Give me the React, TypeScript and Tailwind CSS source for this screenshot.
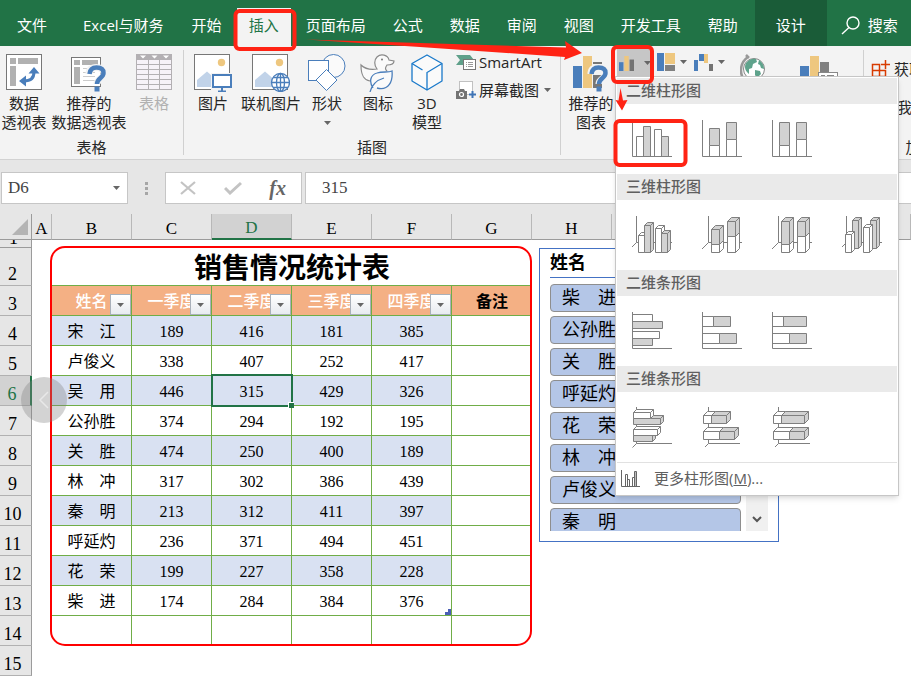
import type { ReactNode } from "react";
import clsx from "clsx";

const UI_FONT = "font-['Open_Sans','Noto_Sans_CJK_SC',sans-serif]";
const CELL_FONT = "font-['Liberation_Serif','Noto_Sans_CJK_SC',serif]";

const tabs = ["开始", "插入", "页面布局", "公式", "数据", "审阅", "视图", "开发工具", "帮助"];
const columns = ["A", "B", "C", "D", "E", "F", "G", "H", "I", "J", "K", "L"];
const quarters = ["姓名", "一季度", "二季度", "三季度", "四季度"];

const sales: [string, number, number, number, number][] = [
  ["宋　江", 189, 416, 181, 385],
  ["卢俊义", 338, 407, 252, 417],
  ["吴　用", 446, 315, 429, 326],
  ["公孙胜", 374, 294, 192, 195],
  ["关　胜", 474, 250, 400, 189],
  ["林　冲", 317, 302, 386, 439],
  ["秦　明", 213, 312, 411, 397],
  ["呼延灼", 236, 371, 494, 451],
  ["花　荣", 199, 227, 358, 228],
  ["柴　进", 174, 284, 384, 376],
];

const slicerItems = ["柴　进", "公孙胜", "关　胜", "呼延灼", "花　荣", "林　冲", "卢俊义", "秦　明"];

const Caret = () => (
  <svg width="7" height="4" viewBox="0 0 7 4" className="shrink-0">
    <path d="M0 0h7L3.5 4z" fill="#666" />
  </svg>
);

/* ---------- ribbon icons ---------- */

const PivotIcon = () => (
  <svg width="36" height="36" viewBox="0 0 36 36">
    <rect x=".5" y=".5" width="35" height="35" fill="#fff" stroke="#777" />
    <path d="M4 4h6v6H4zM12 4h20v6H12zM4 12h6v20H4z" fill="#b1b1b1" />
    <path d="M18 27c7 0 10-3 10-9" fill="none" stroke="#4a7ebb" strokeWidth="3" />
    <path d="M22.500 19.500 28 13l5.500 6.500zM20 21.500 13 27l7 5.500z" fill="#4a7ebb" />
  </svg>
);

const QuestionMark = ({ x, y }: { x: number; y: number }) => (
  <g transform={`translate(${x} ${y})`}>
    <path
      d="M2 9C2 4 5 2.500 9.500 2.500c5 0 7.500 2.500 7.500 6 0 5-7 5-7 10.500"
      fill="none"
      stroke="#f3f3f3"
      strokeWidth="7"
    />
    <path
      d="M2.500 9C3 4.500 5 2.500 9.500 2.500c5 0 7 2.500 7 5.500 0 5-6.500 5-6.500 11"
      fill="none"
      stroke="#4a7ebb"
      strokeWidth="4.500"
    />
    <path d="M7.500 21.500h5v5h-5z" fill="#4a7ebb" />
  </g>
);

const RecommendedPivotIcon = () => (
  <svg width="36" height="38" viewBox="0 0 36 38">
    <rect x=".5" y="3.500" width="29" height="29" fill="#fff" stroke="#777" />
    <path d="M3 6h6v5H3zM11 6h16v5H11zM3 13h6v17H3z" fill="#b1b1b1" />
    <path d="M12 14.500h14M12 18.500h12M12 22.500h12M12 26.500h12" stroke="#ccc" />
    <QuestionMark x={16} y={11} />
  </svg>
);

const TableIcon = () => (
  <svg width="36" height="36" viewBox="0 0 36 36">
    <rect x=".5" y=".5" width="35" height="35" fill="#f6f2f8" stroke="#b3b0b3" />
    <path d="M0 0h36v6H0z" fill="#b3b0b3" />
    <path d="M4 1.500h6l-3 3zM15.500 1.500h6l-3 3zM27 1.500h6l-3 3z" fill="#fff" />
    <path d="M0 10.500h36M0 15.500h36M0 20.500h36M0 25.500h36M0 30.500h36M12.500 6v30M23.500 6v30" stroke="#b3b0b3" />
  </svg>
);

const PhotoBase = () => (
  <>
    <rect x=".5" y=".5" width="35" height="35" fill="#fff" stroke="#777" />
    <circle cx="27.500" cy="8.500" r="3.700" fill="#eec77f" />
    <path d="M3 33v-7l10-8.500 8 7V33z" fill="#c1d3e9" />
  </>
);

const PictureIcon = () => (
  <svg width="38" height="38" viewBox="0 0 38 38">
    <PhotoBase />
    <path d="M17 19h22v17H17z" fill="#f3f3f3" />
    <rect x="19" y="21" width="18" height="12" fill="#fff" stroke="#4a7ebb" strokeWidth="2" />
    <path d="M28 34v3M24 37.500h8" stroke="#4a7ebb" strokeWidth="2" />
  </svg>
);

const OnlinePictureIcon = () => (
  <svg width="38" height="38" viewBox="0 0 38 38">
    <PhotoBase />
    <circle cx="28.500" cy="28.500" r="9" fill="#fff" stroke="#4a7ebb" strokeWidth="1.300" />
    <ellipse cx="28.500" cy="28.500" rx="4" ry="9" fill="none" stroke="#4a7ebb" strokeWidth="1.300" />
    <path d="M28.500 19.500v18M19.500 28.500h18M21 23.500h15M21 33.500h15" stroke="#4a7ebb" strokeWidth="1.300" />
  </svg>
);

const ShapesIcon = () => (
  <svg width="38" height="38" viewBox="0 0 38 38">
    <circle cx="25.500" cy="12" r="11.500" fill="#fafafa" stroke="#4a7ebb" />
    <rect x=".5" y="6.500" width="20" height="20" fill="#fff" stroke="#4a7ebb" />
    <path d="M18.500 15.500 29 26 18.500 36.500 8 26z" fill="#fff" stroke="#4a7ebb" />
  </svg>
);

const DuckIcon = () => (
  <svg width="36" height="38" viewBox="0 0 36 38">
    <path
      d="M10 27C4 26 1 22 1 11c4 4 9 5 16 4-3-4-3-9 0-12 4-4 11-2 12 3l5 1c0 3-3 4-7 4-2 3-2 4 0 6"
      fill="#fafafa"
      stroke="#8a8a8a"
      strokeWidth="1.200"
    />
    <circle cx="22" cy="5.500" r="1" fill="#777" />
    <path
      d="M13 34c-4-6-3-13 4-15 6-2 11 0 15-2 1 10-3 20-15 17M10 38c2-8 7-12 14-14"
      fill="#fafafa"
      stroke="#4a7ebb"
      strokeWidth="1.300"
    />
  </svg>
);

const CubeIcon = () => (
  <svg width="32" height="37" viewBox="0 0 32 37">
    <path
      d="M16 1 31 9.500v17.500L16 36 1 27V9.500z"
      fill="#fafafa"
      stroke="#1979ca"
      strokeWidth="1.300"
      strokeLinejoin="round"
    />
    <path d="M16 36V18.500L31 9.500M1 9.500l10.500 6.500" fill="none" stroke="#1979ca" strokeWidth="1.300" />
  </svg>
);

const SmartArtIcon = () => (
  <svg width="20" height="15" viewBox="0 0 20 15">
    <path d="M0 0h14l4 5-4 5H0l4-5z" fill="#5fa08a" />
    <rect x="7.500" y="4.500" width="12" height="10" fill="#fff" stroke="#777" />
    <path d="M10 7.500h1M12 7.500h5M10 9.500h1M12 9.500h5M10 11.500h1M12 11.500h5" stroke="#999" />
  </svg>
);

const ScreenshotIcon = () => (
  <svg width="20" height="18" viewBox="0 0 20 18">
    <rect x="3.500" y=".5" width="13" height="13" fill="#fff" stroke="#888" strokeDasharray="1 1" />
    <path d="M0 10h3l1-2h4l1 2h2v8H0z" fill="#737373" />
    <circle cx="5.500" cy="13.500" r="2" fill="none" stroke="#fff" strokeWidth="1.200" />
    <path d="M13 13.500h7M16.500 10v7" stroke="#3f74b5" strokeWidth="2" />
  </svg>
);

const RecommendedChartIcon = () => (
  <svg width="36" height="38" viewBox="0 0 36 38">
    <path d="M0 12h9v22H0z" fill="#4a7ebb" />
    <path d="M10 2h9v32h-9z" fill="#eec77f" />
    <path d="M20 8h9v2h-9zM20 21h9v13h-9z" fill="#777" />
    <QuestionMark x={16} y={11} />
  </svg>
);

const ColumnChartIcon = () => (
  <svg width="17" height="17" viewBox="0 0 17 17">
    <path d="M0 7h5v10H0z" fill="#4a7ebb" />
    <path d="M6 0h5v17H6z" fill="#eec77f" />
    <path d="M12 4h5v13h-5z" fill="#737373" />
  </svg>
);

const TreemapIcon = () => (
  <svg width="18" height="18" viewBox="0 0 18 18">
    <path d="M0 0h7v18H0z" fill="#4a7ebb" />
    <path d="M8 0h10v11H8z" fill="#eec77f" />
    <path d="M8 12h10v6H8z" fill="#808080" />
  </svg>
);

const WaterfallIcon = () => (
  <svg width="19" height="17" viewBox="0 0 19 17">
    <path d="M0 6h4v11H0zM5 0h5v7H5z" fill="#4a7ebb" />
    <path d="M10 0h4v9h-4z" fill="#eec77f" />
    <path d="M15 10h4v7h-4z" fill="#737373" />
  </svg>
);

const GlobeIcon = () => (
  <svg width="26" height="32" viewBox="0 0 26 32">
    <path d="M6 1l3 3M8 3C-1 9-1 22 6 27" fill="none" stroke="#999" strokeWidth="2.500" />
    <circle cx="14" cy="15" r="10.500" fill="#fff" stroke="#888" />
    <path
      d="M6 9c3-4 7-5 10-4l1 3-4 2-1 4-3 1v5c-4-3-5-7-3-11zM19 6c3 2 5 5 5 9l-3-1-1-3-2-1zM15 16l5 1 1 3-4 4-2-3z"
      fill="#5fa38c"
    />
  </svg>
);

const PivotChartIcon = () => (
  <svg width="38" height="34" viewBox="0 0 38 34">
    <path d="M0 10h9v20H0z" fill="#4a7ebb" />
    <path d="M10 0h9v30h-9z" fill="#eec77f" />
    <path d="M20 6h9v20h-9z" fill="#808080" />
    <rect x="18.500" y="16.500" width="19" height="15" fill="#fff" stroke="#888" />
    <path d="M21 19.500h4M27 19.500h7" stroke="#888" />
  </svg>
);

const AddInIcon = () => (
  <svg width="20" height="20" viewBox="0 0 20 20">
    <path d="M1.500 5.500h7v12h-7zM8.500 11.500h6v6h-6zM1.500 11.500h7M14.500 1v9M10 5.500h9" fill="none" stroke="#d83b01" strokeWidth="1.500" />
  </svg>
);

/* ---------- chart gallery icons ---------- */

const LINE = "#7f7f7f";
const GREY = "#d2d2d2";
const WHITE = "#fff";

type BoxProps = { x: number; y: number; x2: number; y2: number; fill: string; d?: number };

const Box = ({ x, y, x2, y2, fill, d = 0 }: BoxProps) => (
  <g fill={fill} stroke={LINE} strokeLinejoin="round">
    {d > 0 && <path d={`M${x} ${y}l${d} ${-d}H${x2 + d}V${y2 - d}L${x2} ${y2}zM${x2} ${y}l${d} ${-d}`} />}
    <path d={`M${x} ${y}H${x2}V${y2}H${x}z`} />
  </g>
);

const FlatAxis = () => <path d="M.5 1v36.500H40" fill="none" stroke={LINE} />;
const DeepAxis = () => <path d="M4.500 1v26.500H40M4.500 27.500 0 32" fill="none" stroke={LINE} />;
const DeepBarAxis = () => <path d="M4.500 0v36.500H40M4.500 36.500.5 40.500" fill="none" stroke={LINE} />;

const gallery: { title: string; icons: { name: string; art: ReactNode }[] }[] = [
  {
    title: "二维柱形图",
    icons: [
      {
        name: "簇状柱形图",
        art: (
          <>
            <Box x={4.5} y={17.5} x2={11.5} y2={37.5} fill={WHITE} />
            <Box x={11.5} y={7.5} x2={18.5} y2={37.5} fill={GREY} />
            <Box x={22.5} y={10.5} x2={29.5} y2={37.5} fill={WHITE} />
            <Box x={29.5} y={17.5} x2={36.5} y2={37.5} fill={GREY} />
            <FlatAxis />
          </>
        ),
      },
      {
        name: "堆积柱形图",
        art: (
          <>
            <Box x={7.5} y={9.5} x2={17.5} y2={26.5} fill={GREY} />
            <Box x={7.5} y={26.5} x2={17.5} y2={37.5} fill={WHITE} />
            <Box x={24.5} y={3.5} x2={34.5} y2={20.5} fill={GREY} />
            <Box x={24.5} y={20.5} x2={34.5} y2={37.5} fill={WHITE} />
            <FlatAxis />
          </>
        ),
      },
      {
        name: "百分比堆积柱形图",
        art: (
          <>
            <Box x={7.5} y={3.5} x2={17.5} y2={26.5} fill={GREY} />
            <Box x={7.5} y={26.5} x2={17.5} y2={37.5} fill={WHITE} />
            <Box x={24.5} y={3.5} x2={34.5} y2={20.5} fill={GREY} />
            <Box x={24.5} y={20.5} x2={34.5} y2={37.5} fill={WHITE} />
            <FlatAxis />
          </>
        ),
      },
    ],
  },
  {
    title: "三维柱形图",
    icons: [
      {
        name: "三维簇状柱形图",
        art: (
          <>
            <DeepAxis />
            <Box x={6.5} y={20.5} x2={12.5} y2={37.5} d={3} fill={WHITE} />
            <Box x={12.5} y={10.5} x2={18.5} y2={37.5} d={3} fill={GREY} />
            <Box x={23.5} y={13.5} x2={29.5} y2={37.5} d={3} fill={WHITE} />
            <Box x={29.5} y={18.5} x2={35.5} y2={37.5} d={3} fill={GREY} />
          </>
        ),
      },
      {
        name: "三维堆积柱形图",
        art: (
          <>
            <path d="M6.500 1v26.500H40M6.500 27.500 0 34" fill="none" stroke={LINE} />
            <Box x={9.5} y={29.5} x2={17.5} y2={37.5} d={4} fill={WHITE} />
            <Box x={9.5} y={14.5} x2={17.5} y2={29.5} d={4} fill={GREY} />
            <Box x={25.5} y={21.5} x2={33.5} y2={37.5} d={4} fill={WHITE} />
            <Box x={25.5} y={6.5} x2={33.5} y2={21.5} d={4} fill={GREY} />
          </>
        ),
      },
      {
        name: "三维百分比堆积柱形图",
        art: (
          <>
            <path d="M6.500 1v26.500H40M6.500 27.500 0 34" fill="none" stroke={LINE} />
            <Box x={9.5} y={29.5} x2={17.5} y2={37.5} d={4} fill={WHITE} />
            <Box x={9.5} y={6.5} x2={17.5} y2={29.5} d={4} fill={GREY} />
            <Box x={25.5} y={21.5} x2={33.5} y2={37.5} d={4} fill={WHITE} />
            <Box x={25.5} y={6.5} x2={33.5} y2={21.5} d={4} fill={GREY} />
          </>
        ),
      },
      {
        name: "三维柱形图",
        art: (
          <>
            <DeepAxis />
            <Box x={10.5} y={5.5} x2={16.5} y2={33.5} d={3} fill={GREY} />
            <Box x={3.5} y={19.5} x2={9.5} y2={37.5} d={3} fill={WHITE} />
            <Box x={28.5} y={5.5} x2={34.5} y2={33.5} d={3} fill={GREY} />
            <Box x={21.5} y={12.5} x2={27.5} y2={37.5} d={3} fill={WHITE} />
          </>
        ),
      },
    ],
  },
  {
    title: "二维条形图",
    icons: [
      {
        name: "簇状条形图",
        art: (
          <>
            <Box x={0.5} y={3.5} x2={20.5} y2={10.5} fill={WHITE} />
            <Box x={0.5} y={10.5} x2={30.5} y2={17.5} fill={GREY} />
            <Box x={0.5} y={20.5} x2={27.5} y2={27.5} fill={WHITE} />
            <Box x={0.5} y={27.5} x2={20.5} y2={34.5} fill={GREY} />
            <FlatAxis />
          </>
        ),
      },
      {
        name: "堆积条形图",
        art: (
          <>
            <Box x={0.5} y={5.5} x2={11.5} y2={15.5} fill={WHITE} />
            <Box x={11.5} y={5.5} x2={28.5} y2={15.5} fill={GREY} />
            <Box x={0.5} y={22.5} x2={17.5} y2={32.5} fill={WHITE} />
            <Box x={17.5} y={22.5} x2={34.5} y2={32.5} fill={GREY} />
            <FlatAxis />
          </>
        ),
      },
      {
        name: "百分比堆积条形图",
        art: (
          <>
            <Box x={0.5} y={5.5} x2={11.5} y2={15.5} fill={WHITE} />
            <Box x={11.5} y={5.5} x2={34.5} y2={15.5} fill={GREY} />
            <Box x={0.5} y={22.5} x2={17.5} y2={32.5} fill={WHITE} />
            <Box x={17.5} y={22.5} x2={34.5} y2={32.5} fill={GREY} />
            <FlatAxis />
          </>
        ),
      },
    ],
  },
  {
    title: "三维条形图",
    icons: [
      {
        name: "三维簇状条形图",
        art: (
          <>
            <DeepBarAxis />
            <Box x={1.5} y={28.5} x2={20.5} y2={34.5} d={3} fill={GREY} />
            <Box x={1.5} y={22.5} x2={25.5} y2={28.5} d={3} fill={WHITE} />
            <Box x={1.5} y={11.5} x2={28.5} y2={17.5} d={3} fill={GREY} />
            <Box x={1.5} y={5.5} x2={18.5} y2={11.5} d={3} fill={WHITE} />
          </>
        ),
      },
      {
        name: "三维堆积条形图",
        art: (
          <>
            <path d="M6.500 0v36.500H38M6.500 36.500 3 40" fill="none" stroke={LINE} />
            <Box x={1.5} y={24.5} x2={17.5} y2={32.5} d={4} fill={WHITE} />
            <Box x={17.5} y={24.5} x2={32.5} y2={32.5} d={4} fill={GREY} />
            <Box x={1.5} y={8.5} x2={9.5} y2={16.5} d={4} fill={WHITE} />
            <Box x={9.5} y={8.5} x2={24.5} y2={16.5} d={4} fill={GREY} />
          </>
        ),
      },
      {
        name: "三维百分比堆积条形图",
        art: (
          <>
            <path d="M6.500 0v36.500H38M6.500 36.500 3 40" fill="none" stroke={LINE} />
            <Box x={1.5} y={24.5} x2={17.5} y2={32.5} d={4} fill={WHITE} />
            <Box x={17.5} y={24.5} x2={32.5} y2={32.5} d={4} fill={GREY} />
            <Box x={1.5} y={8.5} x2={9.5} y2={16.5} d={4} fill={WHITE} />
            <Box x={9.5} y={8.5} x2={32.5} y2={16.5} d={4} fill={GREY} />
          </>
        ),
      },
    ],
  },
];

/* ---------- page parts ---------- */

const TabBar = () => (
  <nav className="flex h-[46px] shrink-0 items-end overflow-hidden bg-[#217346] text-[15px] text-white whitespace-nowrap">
    <button className="ml-[5px] h-[38px] shrink-0 px-3 pb-1">文件</button>
    <button className="ml-3 h-[38px] shrink-0 px-3 pb-1">Excel与财务</button>
    <div className="ml-1 flex shrink-0 gap-[3px]">
      {tabs.map((tab) => (
        <button
          key={tab}
          className={clsx("h-[38px] px-3 pb-1", tab === "插入" && "bg-[#f3f3f3] text-[#217346]")}
        >
          {tab}
        </button>
      ))}
    </div>
    <button className="ml-[5px] h-[46px] w-[72px] shrink-0 bg-[#1a5c38] pt-1">设计</button>
    <button className="ml-[14px] flex h-[46px] shrink-0 items-center gap-2 pt-1">
      <svg width="19" height="19" viewBox="0 0 19 19" fill="none" stroke="#fff" strokeWidth="1.400">
        <circle cx="12" cy="7" r="6" />
        <path d="M8 11.500 1 18" />
      </svg>
      搜索
    </button>
  </nav>
);

type RibbonButtonProps = { icon: ReactNode; lines: string[]; className: string; caret?: boolean; disabled?: boolean };

const RibbonButton = ({ icon, lines, className, caret, disabled }: RibbonButtonProps) => (
  <button
    disabled={disabled}
    className={clsx("flex shrink-0 flex-col items-center whitespace-nowrap leading-[19px] disabled:text-[#b1b1b1]", className)}
  >
    <span className="flex h-10 items-start">{icon}</span>
    {lines.map((line) => (
      <span key={line}>{line}</span>
    ))}
    {caret && (
      <span className="pt-2">
        <Caret />
      </span>
    )}
  </button>
);

const RibbonGroup = ({ label, className, children }: { label: string; className?: string; children: ReactNode }) => (
  <section className={clsx("flex shrink-0 flex-col pt-2", className)}>
    <div className="flex h-[83px] items-start">{children}</div>
    <p className="text-center leading-5">{label}</p>
  </section>
);

const Divider = () => <div className="my-1 w-px shrink-0 bg-[#d0d0d0]" />;

const Ribbon = () => (
  <div className="flex h-[114px] shrink-0 overflow-hidden border-b border-[#d2d2d2] bg-[#f3f3f3] text-[15px] text-[#262626]">
    <RibbonGroup label="表格" className="w-[183px]">
      <RibbonButton icon={<PivotIcon />} lines={["数据", "透视表"]} className="w-12" />
      <RibbonButton icon={<RecommendedPivotIcon />} lines={["推荐的", "数据透视表"]} className="w-[82px]" />
      <RibbonButton icon={<TableIcon />} lines={["表格"]} className="w-12" disabled />
    </RibbonGroup>
    <Divider />
    <RibbonGroup label="插图" className="w-[376px]">
      <RibbonButton icon={<PictureIcon />} lines={["图片"]} className="w-[58px]" />
      <RibbonButton icon={<OnlinePictureIcon />} lines={["联机图片"]} className="w-[58px]" />
      <RibbonButton icon={<ShapesIcon />} lines={["形状"]} className="w-[54px]" caret />
      <RibbonButton icon={<DuckIcon />} lines={["图标"]} className="w-12" />
      <RibbonButton icon={<CubeIcon />} lines={["3D", "模型"]} className="w-[50px]" />
      <div className="-mt-1 flex flex-col gap-1 pl-1 whitespace-nowrap">
        <button className="flex h-6 items-center gap-[3px]">
          <SmartArtIcon /> SmartArt
        </button>
        <button className="flex h-6 items-center gap-[3px]">
          <ScreenshotIcon /> 屏幕截图
          <span className="pl-[2px]">
            <Caret />
          </span>
        </button>
      </div>
    </RibbonGroup>
    <Divider />
    <RibbonGroup label="图表" className="w-[302px]">
      <RibbonButton icon={<RecommendedChartIcon />} lines={["推荐的", "图表"]} className="ml-1 w-[52px]" />
      <div className="-mt-[6px] flex">
        <button aria-label="插入柱形图或条形图" className="flex h-[30px] w-[34px] items-center gap-[10px] bg-[#c6c6c6] pl-[2px]">
          <ColumnChartIcon />
          <Caret />
        </button>
        <button aria-label="插入层次结构图表" className="ml-[6px] flex h-7 w-8 items-center gap-[5px]">
          <TreemapIcon />
          <Caret />
        </button>
        <button aria-label="插入瀑布图" className="ml-[5px] flex h-7 w-8 items-center gap-[5px]">
          <WaterfallIcon />
          <Caret />
        </button>
      </div>
      <button aria-label="地图" className="ml-[14px]">
        <GlobeIcon />
      </button>
      <button aria-label="数据透视图" className="ml-[34px] pt-[2px]">
        <PivotChartIcon />
      </button>
    </RibbonGroup>
    <Divider />
    <RibbonGroup label="加载项" className="w-[128px]">
      <div className="flex flex-col gap-4 pt-1 pl-[7px]">
        <button className="flex items-center gap-[3px] whitespace-nowrap">
          <AddInIcon /> 获取加载项
        </button>
        <button className="pl-[26px] text-left leading-5 whitespace-nowrap">我的加载项</button>
      </div>
    </RibbonGroup>
  </div>
);

const FormulaBar = () => (
  <div className={clsx("flex shrink-0 items-center bg-[#e6e6e6] pt-3 pb-[10px] pl-px text-[17px] text-[#444]", CELL_FONT)}>
    <div className="flex h-8 w-[127px] shrink-0 items-center border border-[#c6c6c6] bg-white pr-[7px] pl-[6px]">
      <input aria-label="名称框" defaultValue="D6" className="w-full min-w-0 outline-none" />
      <Caret />
    </div>
    <div className="flex w-[37px] shrink-0 flex-col items-center gap-[2px]">
      <span className="size-[3px] bg-[#a6a6a6]" />
      <span className="size-[3px] bg-[#a6a6a6]" />
      <span className="size-[3px] bg-[#a6a6a6]" />
    </div>
    <div className="flex h-8 w-[137px] shrink-0 items-center justify-between border border-[#c6c6c6] bg-white px-[14px]">
      <button aria-label="取消">
        <svg width="16" height="14" viewBox="0 0 16 14" stroke="#c3c3c3" strokeWidth="2.200">
          <path d="M1 1l14 12M15 1 1 13" />
        </svg>
      </button>
      <button aria-label="输入">
        <svg width="18" height="14" viewBox="0 0 18 14" fill="none" stroke="#c3c3c3" strokeWidth="3">
          <path d="M1 7l5 5L17 2" />
        </svg>
      </button>
      <button className="pr-px text-xl font-bold italic text-[#666] font-['Liberation_Serif',serif]">fx</button>
    </div>
    <input
      aria-label="编辑栏"
      defaultValue="315"
      className="ml-[3px] h-8 min-w-0 flex-1 border border-r-0 border-[#c6c6c6] bg-white pl-4 outline-none"
    />
  </div>
);

const RowHeader = ({ n }: { n: number }) => (
  <th
    scope="row"
    className={clsx(
      "border-b border-[#b1b1b1] p-0 pr-[6px] align-bottom text-lg leading-[22px] font-normal",
      n === 6 ? "border-r-2 border-r-[#217346] bg-[#d2d2d2] text-[#217346]" : "border-r border-r-[#9b9b9b] bg-[#e6e6e6]"
    )}
  >
    {n}
  </th>
);

const gridCell = "relative border-b border-[#70ad47] p-0 pt-[2px] text-center";

const Sheet = () => (
  <table className={clsx("w-full table-fixed border-separate border-spacing-0 text-base leading-5 text-black", CELL_FONT)}>
    <colgroup>
      <col className="w-8" />
      <col className="w-5" />
      {columns.slice(1, -1).map((c) => (
        <col key={c} className="w-20" />
      ))}
      <col />
    </colgroup>
    <thead>
      <tr className="h-[26px] bg-[#e6e6e6]">
        <td className="border-r border-b border-[#9b9b9b] p-0">
          <svg width="16" height="16" viewBox="0 0 16 16" className="ml-3">
            <path d="M16 0v16H0z" fill="#b4b4b4" />
          </svg>
        </td>
        {columns.map((c) => (
          <th
            key={c}
            scope="col"
            className={clsx(
              "border-r border-r-[#b8b8b8] p-0 text-[17px] leading-5 font-normal",
              c === "D" ? "border-b-2 border-b-[#217346] bg-[#d2d2d2] pt-1 text-[#217346]" : "border-b border-b-[#9b9b9b] pt-[5px]"
            )}
          >
            {c}
          </th>
        ))}
      </tr>
    </thead>
    <tbody>
      <tr className="h-2">
        <th scope="row" className="border-r border-b border-[#9b9b9b] bg-[#e6e6e6] p-0 text-lg font-normal">
          <div className="flex h-[7px] items-end justify-center overflow-hidden pr-1 leading-[22px]">
            <span className="h-[20px]">1</span>
          </div>
        </th>
        <td colSpan={12} className="p-0" />
      </tr>
      <tr className="h-[38px]">
        <RowHeader n={2} />
        <td className="p-0" />
        <td colSpan={6} className="border-b border-[#70ad47] p-0 pt-1 text-center text-[28px] leading-8 font-bold">
          销售情况统计表
        </td>
        <td colSpan={5} />
      </tr>
      <tr className="h-[30px]">
        <RowHeader n={3} />
        <td className="p-0" />
        {quarters.map((q) => (
          <td key={q} className={clsx(gridCell, "border-r bg-[#f4b084] font-medium text-white")}>
            {q}
            <button
              aria-label={`筛选${q}`}
              className="absolute right-0 bottom-0 flex h-[21px] w-[21px] items-center justify-center border border-[#a9b0ba] bg-gradient-to-b from-white to-[#e8ebf0]"
            >
              <Caret />
            </button>
          </td>
        ))}
        <td className={clsx(gridCell, "bg-[#f4b084] font-bold")}>备注</td>
        <td colSpan={5} />
      </tr>
      {sales.map((row, i) => (
        <tr key={row[0]} className="h-[30px]">
          <RowHeader n={i + 4} />
          <td className="p-0" />
          {row.map((value, j) => (
            <td key={j} className={clsx(gridCell, "border-r", i % 2 === 0 && "bg-[#d9e1f2]")}>
              {value}
              {i === 2 && j === 2 && (
                <span className="absolute -top-[2px] -right-[2px] -bottom-[2px] -left-px z-10 border-2 border-[#217346]">
                  <span className="absolute -right-[3px] -bottom-[3px] size-[6px] border-t border-l border-white bg-[#217346]" />
                </span>
              )}
              {i === sales.length - 1 && j === row.length - 1 && (
                <svg width="6" height="6" viewBox="0 0 6 6" className="absolute right-0 bottom-0">
                  <path d="M3 0h3v6H0V3h3z" fill="#4a5fb5" />
                </svg>
              )}
            </td>
          ))}
          <td className={gridCell} />
          <td colSpan={5} />
        </tr>
      ))}
      <tr className="h-[30px]">
        <RowHeader n={14} />
        <td className="p-0" />
        {columns.slice(1, 6).map((c) => (
          <td key={c} className="border-r border-[#70ad47] p-0" />
        ))}
        <td colSpan={6} />
      </tr>
      <tr className="h-[30px]">
        <RowHeader n={15} />
        <td colSpan={12} />
      </tr>
    </tbody>
  </table>
);

const Slicer = () => (
  <div
    className={clsx(
      "absolute top-[34px] left-[539px] h-[294px] w-[240px] border border-[#4472c4] bg-white px-[10px] text-lg text-black",
      CELL_FONT
    )}
  >
    <p className="h-[29px] border-b border-[#4472c4] leading-7 font-bold">姓名</p>
    <div className="mt-[6px] flex h-[247px] gap-[5px] overflow-hidden">
      <div className="flex flex-1 flex-col gap-1">
        {slicerItems.map((name) => (
          <button
            key={name}
            className="h-7 shrink-0 rounded border border-[#8e8e8e] bg-[#b4c6e7] pl-[11px] text-left leading-[26px]"
          >
            {name}
          </button>
        ))}
      </div>
      <button aria-label="向下滚动" className="flex w-[22px] items-end justify-center bg-[#f0f0f0] pb-2">
        <svg width="10" height="7" viewBox="0 0 10 7" fill="none" stroke="#555" strokeWidth="2">
          <path d="M1 1l4 4 4-4" />
        </svg>
      </button>
    </div>
  </div>
);

const ChartMenu = () => (
  <div className="absolute top-[76px] left-[615px] w-[284px] border border-[#c6c6c6] bg-white p-px text-[15px] text-[#5f5f5f] shadow-md">
    {gallery.map((section) => (
      <section key={section.title}>
        <h2 className="h-[26px] bg-[#eaeaea] pl-[9px] leading-6 font-medium text-[#5f5f5f]">{section.title}</h2>
        <div className="flex h-[70px]">
          {section.icons.map((icon) => (
            <button key={icon.name} aria-label={icon.name} className="flex w-[70px] items-center justify-center">
              <svg width="40" height="40" viewBox="0 0 40 40" className="overflow-visible">
                {icon.art}
              </svg>
            </button>
          ))}
        </div>
      </section>
    ))}
    <button className="flex h-8 w-full items-center gap-[14px] border-t border-[#e1e1e1] pl-1">
      <svg width="19" height="18" viewBox="0 0 19 18" fill="#fff" stroke="#666">
        <path d="M4.500 4.500h2v12h-2zM6.500 9.500h2v7h-2zM11.500 7.500h2v9h-2z" />
        <path d="M13.500 1.500h2v15h-2z" fill="#bbb" />
        <path d="M.5 0v16.500H19" fill="none" />
      </svg>
      <span>
        更多柱形图(<u>M</u>)...
      </span>
    </button>
  </div>
);

/* Red tutorial marks: boxes round the steps and the arrows between them */
const Annotations = () => (
  <svg className="pointer-events-none absolute top-0 left-0" width="700" height="180" viewBox="0 0 700 180">
    <g fill="none" stroke="#ff2314" strokeWidth="4">
      <rect x="235.500" y="11" width="59" height="38" rx="4" />
      <rect x="613" y="47" width="39" height="35" rx="4" />
      <rect x="615.500" y="121" width="70" height="44" rx="4" />
    </g>
    <path d="M306 39.500 566 47.500 565 41 582 53 564 60 565 57 420 47z" fill="#ff2314" />
    <path d="M620.500 88 623 100.500 627.500 100 622 110.500 615.500 100 618.500 100.500z" fill="#ff2314" />
  </svg>
);

export default function App() {
  return (
    <main className={clsx("relative flex h-screen flex-col overflow-hidden bg-white", UI_FONT)}>
      <TabBar />
      <Ribbon />
      <FormulaBar />
      <div className="relative min-h-0 flex-1">
        <Sheet />
        <div className="pointer-events-none absolute top-8 left-[50px] h-[400px] w-[482px] rounded-[15px] border-2 border-[#ff0000]" />
        <Slicer />
        <button
          aria-label="上一张"
          className="absolute top-[163px] left-[21px] flex size-[46px] items-center justify-center rounded-full bg-[#808080]/35"
        >
          <svg width="12" height="18" viewBox="0 0 12 18" fill="none" stroke="#e8e8e8" strokeWidth="1.500">
            <path d="M10 1 2 9l8 8" />
          </svg>
        </button>
      </div>
      <ChartMenu />
      <Annotations />
    </main>
  );
}
